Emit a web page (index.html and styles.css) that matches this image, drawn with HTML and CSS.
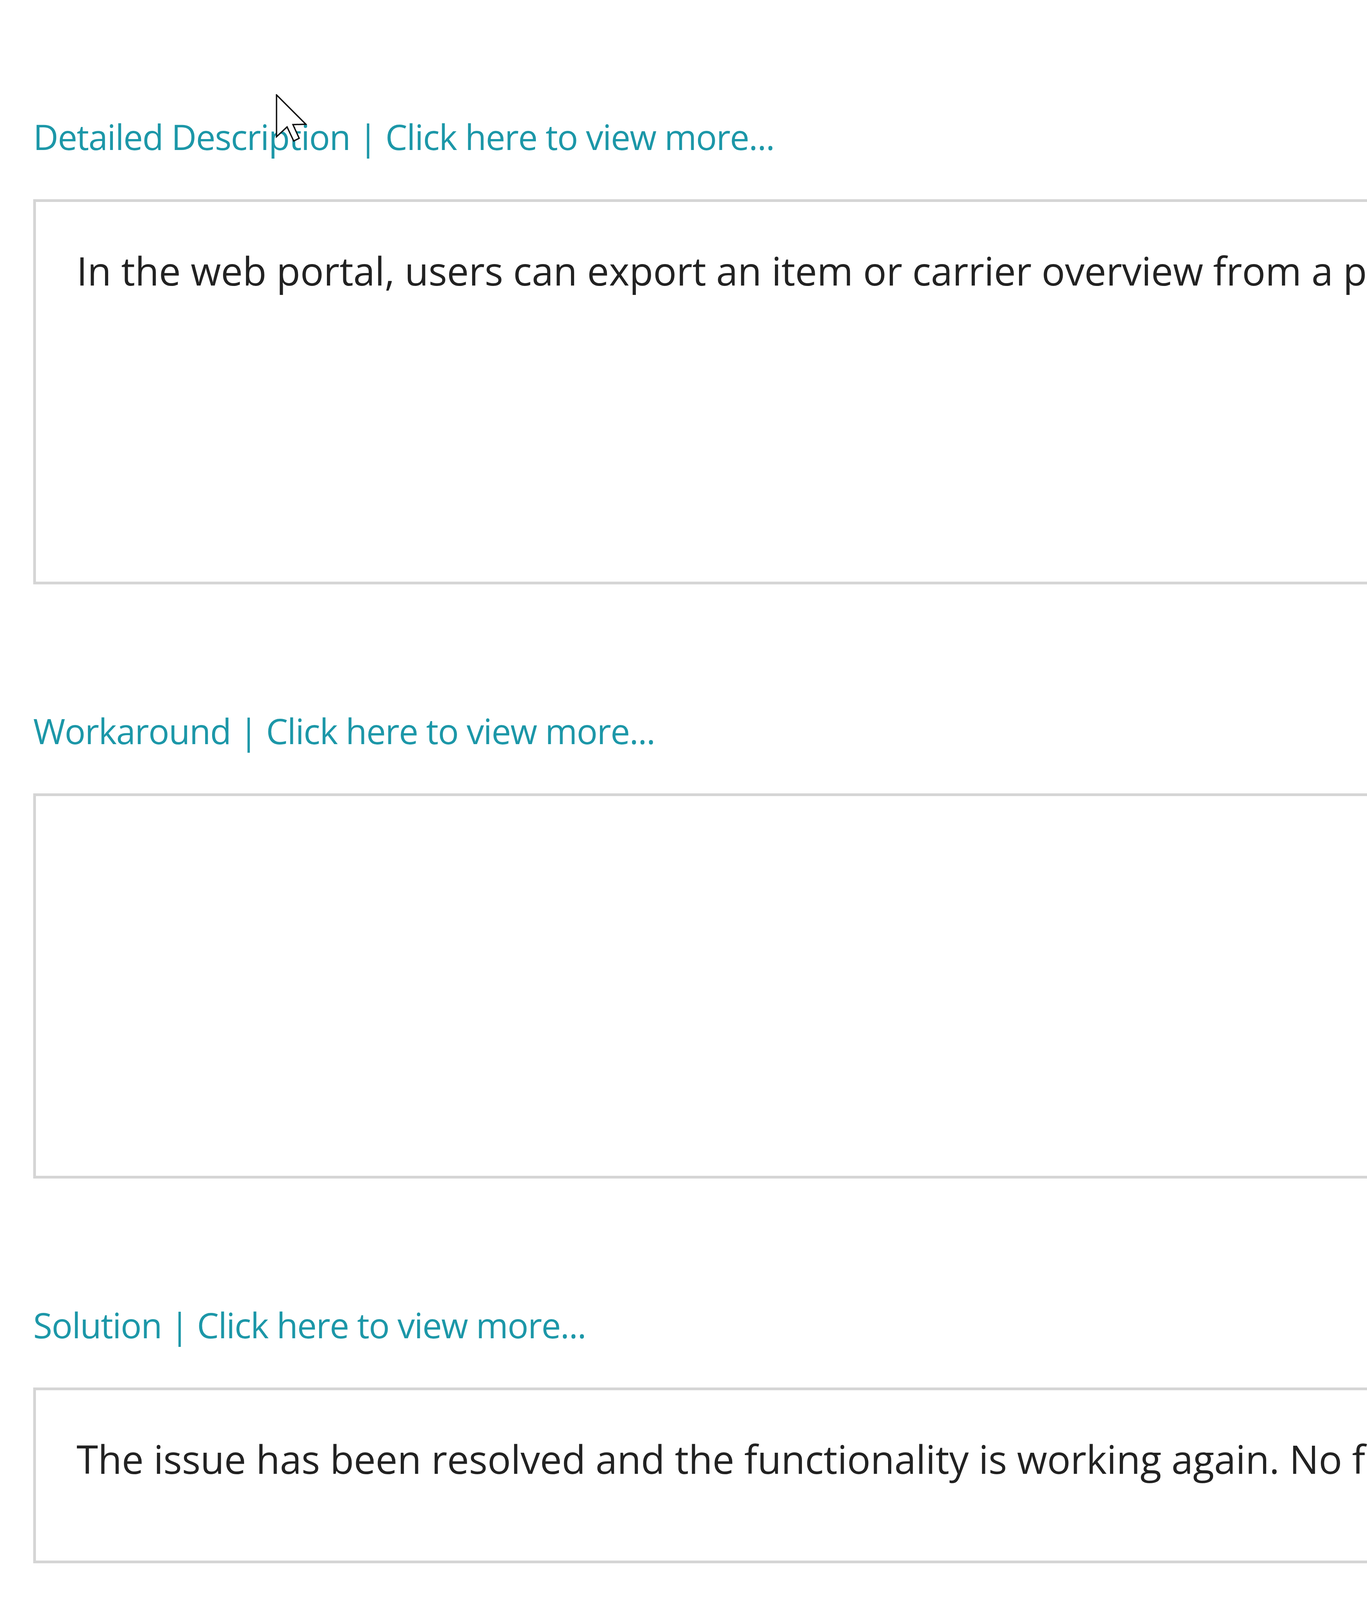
FILE: index.html
```html
<!DOCTYPE html>
<html lang="en">
<head>
<meta charset="utf-8">
<title>Issue details</title>
<link rel="stylesheet" href="styles.css">
</head>
<body>
<div class="page">
  <section class="field">
    <a class="field-label" href="#">Detailed Description | Click here to view more...</a>
    <div class="field-box tall">
      <p class="field-text">In the web portal, users can export an item or carrier overview from a portal page to an Excel file.</p>
    </div>
  </section>
  <section class="field">
    <a class="field-label" href="#">Workaround | Click here to view more...</a>
    <div class="field-box tall"></div>
  </section>
  <section class="field">
    <a class="field-label" href="#">Solution | Click here to view more...</a>
    <div class="field-box short">
      <p class="field-text">The issue has been resolved and the functionality is working again. No further action is required.</p>
    </div>
  </section>
  <svg class="cursor" viewBox="0 0 80 125" width="80" height="125" aria-hidden="true">
    <polygon points="2,2 2,109 29,84 46,120 60,113 44,78 77,77" fill="#ffffff" stroke="#111111" stroke-width="3.5" stroke-linejoin="miter"/>
  </svg>
</div>
</body>
</html>
```
FILE: styles.css
```css
html, body {
  margin: 0;
  padding: 0;
  background: #ffffff;
  overflow: hidden;
}
.page {
  position: relative;
  width: 3500px;
  height: 4250px;
  overflow: hidden;
  box-sizing: border-box;
  padding: 300px 0 0 85px;
  font-family: "Open Sans", "Noto Sans", sans-serif;
}
.field {
  display: flex;
  flex-direction: column;
  align-items: flex-start;
  margin-bottom: 325px;
}
.field:last-of-type {
  margin-bottom: 0;
}
.field-label {
  display: block;
  font-size: 89px;
  line-height: 100px;
  color: #1c97a8;
  text-decoration: none;
  white-space: nowrap;
  letter-spacing: -1.6px;
}
.field-box {
  box-sizing: border-box;
  width: 5000px;
  margin-top: 110px;
  border: 7px solid #d5d5d5;
  padding: 115px 0 0 104px;
}
.field-box.tall { height: 986px; }
.field-box.short { height: 450px; }
.field-text {
  margin: 0;
  font-size: 100px;
  line-height: 120px;
  color: #222222;
  white-space: nowrap;
  letter-spacing: -0.3px;
}
.cursor {
  position: absolute;
  left: 706px;
  top: 241px;
}
```
